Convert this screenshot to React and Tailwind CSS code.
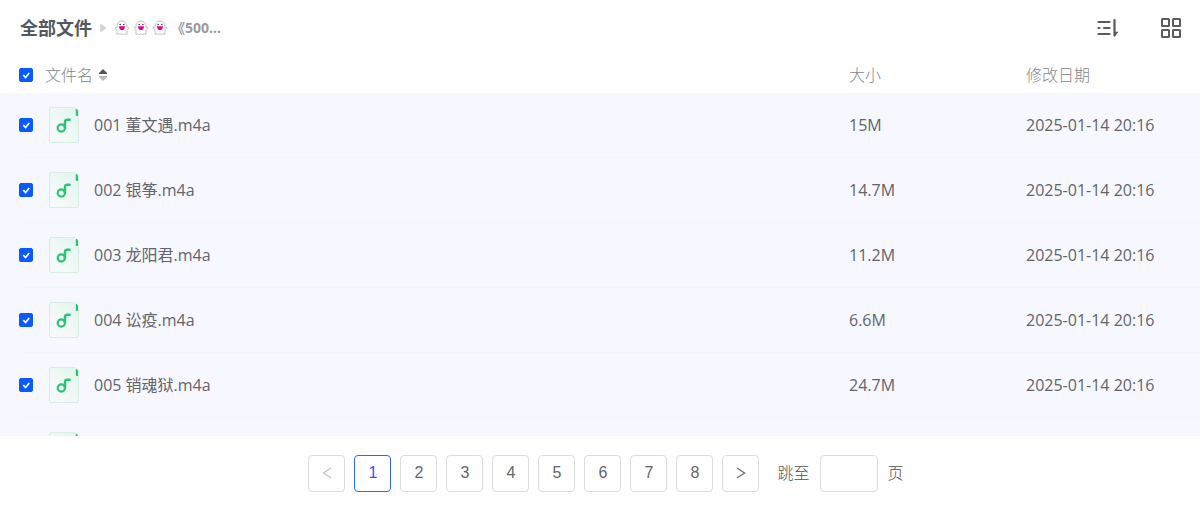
import { useState } from "react";

const files = [
  { name: "001 董文遇.m4a", size: "15M", date: "2025-01-14 20:16" },
  { name: "002 银筝.m4a", size: "14.7M", date: "2025-01-14 20:16" },
  { name: "003 龙阳君.m4a", size: "11.2M", date: "2025-01-14 20:16" },
  { name: "004 讼疫.m4a", size: "6.6M", date: "2025-01-14 20:16" },
  { name: "005 销魂狱.m4a", size: "24.7M", date: "2025-01-14 20:16" },
  { name: "", size: "", date: "" },
];

const pages = [1, 2, 3, 4, 5, 6, 7, 8];

function Ghost() {
  return (
    <svg viewBox="0 0 16 16" className="size-4" aria-hidden="true">
      <path
        d="M3 14.500V10L1.200 8.600 1.600 7.300 3 7.500V6a5 5 0 0 1 10 0v1.500l1.400-.2.4 1.300L13 10v4.500l-1.700-.8-1.700.8-1.600-.8-1.600.8-1.700-.8z"
        fill="#fff"
        stroke="#b4b4b4"
        strokeWidth=".8"
        strokeLinejoin="round"
      />
      <path d="M5 6.200h6c0 2.400-1.200 3.900-3 3.900S5 8.600 5 6.200z" fill="#e6009a" />
      <circle cx="6.200" cy="4.500" r=".8" fill="#333" />
      <circle cx="9.800" cy="4.500" r=".8" fill="#333" />
    </svg>
  );
}

function AudioIcon() {
  return (
    <svg viewBox="0 0 30 36" className="h-9 w-[30px] shrink-0" aria-hidden="true">
      <defs>
        <linearGradient id="sheet" x1="1" y1="0" x2=".3" y2=".7">
          <stop offset="0" stopColor="#e1f4ec" />
          <stop offset="1" stopColor="#f4faf8" />
        </linearGradient>
      </defs>
      <path
        d="M2 .5H26L29.500 4V34a1.500 1.500 0 0 1-1.500 1.500H2A1.500 1.500 0 0 1 .5 34V2A1.500 1.500 0 0 1 2 .5z"
        fill="url(#sheet)"
        stroke="#d6eee4"
      />
      <path d="M26.800 2h1L29 3.500V9h-1.200a1 1 0 0 1-1-1z" fill="#2dc278" />
      <circle cx="12.300" cy="21" r="3.600" fill="none" stroke="#2dc278" strokeWidth="2.200" />
      <path
        d="M16 21V15Q16 12.700 18.300 12.700H20.600"
        fill="none"
        stroke="#2dc278"
        strokeWidth="2.500"
        strokeLinecap="round"
      />
    </svg>
  );
}

function Check({ label, checked, onChange }) {
  return (
    <span className="relative flex size-3.5 shrink-0">
      <input
        type="checkbox"
        aria-label={label}
        checked={checked}
        onChange={onChange}
        className="size-3.5 appearance-none rounded-xs border border-[#c4c8d0] bg-white checked:border-[#0a5bff] checked:bg-[#0a5bff]"
      />
      <svg viewBox="0 0 14 14" className="pointer-events-none absolute inset-0" aria-hidden="true">
        <path d="M4.300 7.200l2.300 2.300 3.600-4.600" fill="none" stroke="#fff" strokeWidth="1.700" />
      </svg>
    </span>
  );
}

export default function App() {
  const [selected, setSelected] = useState(files.map(() => true));
  const [page, setPage] = useState(1);
  const all = selected.every(Boolean);
  const toggle = (i) => setSelected(selected.map((s, n) => (n === i ? !s : s)));

  return (
    <main className="flex h-screen flex-col bg-white font-['Open_Sans','Noto_Sans_CJK_SC',sans-serif] text-base text-[#636569]">
      <header className="flex h-14 shrink-0 items-center justify-between pr-[18px] pl-5">
        <nav aria-label="路径" className="flex items-center font-bold">
          <a href="#all" className="text-lg text-[#54585e]">
            全部文件
          </a>
          <svg viewBox="0 0 6 8" className="ml-2 h-2 w-1.5" aria-hidden="true">
            <path d="M0 1l1-1 5 3.500v1L1 8 0 7z" fill="#d4d4d4" />
          </svg>
          <a href="#folder" className="ml-2 flex items-center gap-[3px] text-sm text-[#999b9f]">
            <Ghost />
            <Ghost />
            <Ghost />
            <span>《500...</span>
          </a>
        </nav>
        <div className="flex items-center gap-10">
          <button type="button" aria-label="排序">
            <svg viewBox="0 0 24 22" className="h-[22px] w-6" fill="none" stroke="#5b5b5b" strokeWidth="2.200" strokeLinecap="round" aria-hidden="true">
              <path d="M2.500 5h11M2.500 11h1M8 11h5.500M2.500 17h11M18.500 3v15.500" />
              <path d="M18.500 14.800h4l-4 5z" fill="#5b5b5b" stroke="none" />
            </svg>
          </button>
          <button type="button" aria-label="网格视图">
            <svg viewBox="0 0 22 22" className="size-[22px]" fill="none" stroke="#5b5b5b" strokeWidth="2" aria-hidden="true">
              <rect x="2" y="2" width="7" height="7" rx=".5" />
              <rect x="13" y="2" width="7" height="7" rx=".5" />
              <rect x="2" y="13" width="7" height="7" rx=".5" />
              <rect x="13" y="13" width="7" height="7" rx=".5" />
            </svg>
          </button>
        </div>
      </header>

      <section className="min-h-0 flex-1 overflow-hidden">
        <table className="w-full table-fixed border-separate border-spacing-0 text-left">
          <colgroup>
            <col />
            <col className="w-[177px]" />
            <col className="w-[174px]" />
          </colgroup>
          <thead className="text-[#85878c]">
            <tr>
              <th scope="col" className="p-0 font-light">
                <div className="ml-[19px] flex h-[37px] items-center">
                  <Check label="全选" checked={all} onChange={() => setSelected(files.map(() => !all))} />
                  <button type="button" className="ml-3 flex items-center gap-1.5">
                    文件名
                    <svg viewBox="0 0 8 12" className="h-3 w-2" aria-hidden="true">
                      <path d="M4 0l4 4v1H0V4z" fill="#555" />
                      <path d="M4 12L0 8V7h8v1z" fill="#b9b9b9" />
                    </svg>
                  </button>
                </div>
              </th>
              <th scope="col" className="p-0 font-light">大小</th>
              <th scope="col" className="p-0 font-light">修改日期</th>
            </tr>
          </thead>
          <tbody className="bg-[#f6f7ff]">
            {files.map((file, i) => (
              <tr key={i}>
                <td className="p-0">
                  <div className="ml-[19px] flex h-[65px] items-center border-b border-[#f3f5fa]">
                    <Check label={file.name || "文件"} checked={selected[i]} onChange={() => toggle(i)} />
                    <span className="ml-4 flex items-center gap-[15px]">
                      <AudioIcon />
                      {file.name}
                    </span>
                  </div>
                </td>
                <td className="border-b border-[#f3f5fa] p-0">{file.size}</td>
                <td className="border-b border-[#f3f5fa] p-0">{file.date}</td>
              </tr>
            ))}
          </tbody>
        </table>
      </section>

      <footer className="flex h-[70px] shrink-0 items-center justify-center pt-1 pl-3">
        <nav aria-label="分页" className="flex gap-[9px] font-['Liberation_Sans',sans-serif]">
          <button
            type="button"
            aria-label="上一页"
            disabled={page === 1}
            onClick={() => setPage(page - 1)}
            className="flex size-[37px] items-center justify-center rounded-sm border border-[#dcdcdc] text-[#636569] disabled:text-[#c8c8c8]"
          >
            <svg viewBox="0 0 10 12" className="h-3 w-2.5" fill="none" stroke="currentColor" strokeWidth="1.400" aria-hidden="true">
              <path d="M9 1L1.500 6 9 11" />
            </svg>
          </button>
          {pages.map((n) => (
            <button
              key={n}
              type="button"
              aria-current={n === page ? "page" : undefined}
              onClick={() => setPage(n)}
              className="size-[37px] rounded-sm border border-[#dcdcdc] aria-[current=page]:border-[#2b68ff] aria-[current=page]:text-[#1e5eff]"
            >
              {n}
            </button>
          ))}
          <button
            type="button"
            aria-label="下一页"
            disabled={page === 8}
            onClick={() => setPage(page + 1)}
            className="flex size-[37px] items-center justify-center rounded-sm border border-[#dcdcdc] text-[#777] disabled:text-[#c8c8c8]"
          >
            <svg viewBox="0 0 10 12" className="h-3 w-2.5" fill="none" stroke="currentColor" strokeWidth="1.500" aria-hidden="true">
              <path d="M1 1l7.500 5L1 11" />
            </svg>
          </button>
        </nav>
        <label className="ml-[18px] flex items-center gap-2.5 font-light text-[#505257]">
          跳至
          <input type="text" className="h-[37px] w-[58px] rounded-sm border border-[#dcdcdc] px-2" />
          页
        </label>
      </footer>
    </main>
  );
}
